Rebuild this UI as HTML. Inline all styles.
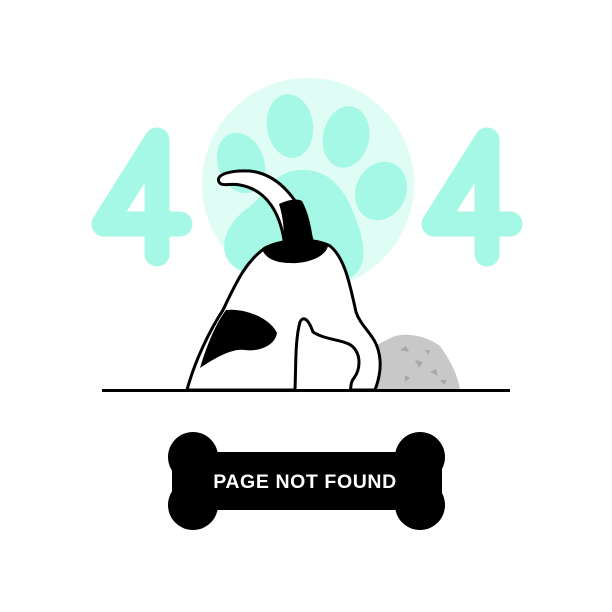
<!DOCTYPE html>
<html><head><meta charset="utf-8"><style>
html,body{margin:0;padding:0;background:#fff;width:612px;height:612px;overflow:hidden}
svg{display:block}
</style></head><body>
<svg width="612" height="612" viewBox="0 0 612 612" xmlns="http://www.w3.org/2000/svg">
<rect width="612" height="612" fill="#fff"/>
<g fill="none" stroke="#a5f7e6" stroke-width="25" stroke-linecap="round" stroke-linejoin="round">
<path d="M157 140 L157 254 M157 140 L104 224 L180 224"/>
<path d="M487 140 L487 254 M487 140 L434 224 L510 224"/>
</g>
<circle cx="308" cy="184" r="106" fill="#dffcf5"/>
<g fill="#a5f7e6">
<ellipse cx="290" cy="126" rx="23" ry="32" transform="rotate(-8 290 126)"/>
<ellipse cx="346" cy="137" rx="23" ry="31" transform="rotate(12 346 137)"/>
<ellipse cx="241" cy="163" rx="23" ry="31" transform="rotate(-20 241 163)"/>
<ellipse cx="381" cy="191" rx="25" ry="30" transform="rotate(25 381 191)"/>
<path d="M300 170 C335 168 350 200 358 225 C370 258 362 282 335 280 C315 278 305 264 290 264 C268 264 250 282 232 265 C215 248 228 222 248 208 C268 193 272 172 300 170 Z"/>
</g>
<path d="M312 390 C330 370 375 345 395 336 C410 332 430 338 440 346 C450 360 458 375 460 390 Z" fill="#c8c8c8"/>
<g fill="#a8a8a8">
<path d="M400 350 l6 -4 l3 6z"/><path d="M415 360 l8 2 l-4 6z"/><path d="M430 372 l6 -3 l2 7z"/><path d="M405 375 l5 3 l-5 4z"/><path d="M425 350 l5 0 l-2 5z"/><path d="M440 380 l7 0 l-3 5z"/><path d="M335 378 l6 -2 l0 6z"/>
</g>
<path d="M187 390 C195 360 210 330 223 310 C235 285 245 262 265 248 C285 238 315 238 330 246 C345 258 350 285 356 312 C362 330 378 335 380 360 C381 372 378 382 375 390 Z" fill="#fff" stroke="#000" stroke-width="3" stroke-linejoin="round"/>
<path d="M262 249 C280 238 312 236 328 246 C325 258 305 264 290 263 C275 263 265 258 262 249 Z" fill="#000"/>
<path d="M226 310 C245 308 270 318 277 333 C275 346 258 352 245 350 C232 348 215 358 200 368 C207 345 215 325 226 310 Z" fill="#000"/>
<path d="M295 390 C296 365 295 340 300 322 C303 316 308 318 313 332 C325 340 345 340 352 346 C362 355 360 370 354 378 C349 384 352 388 350 390" fill="#fff" stroke="#000" stroke-width="3" stroke-linejoin="round"/>
<path d="M219 182 C215 174 232 170 250 171 C278 174 302 200 312 240 L284 240 C280 215 268 190 240 185 C230 183 222 187 219 182 Z" fill="#fff" stroke="#000" stroke-width="3" stroke-linejoin="round"/>
<path d="M279 204 C288 200 296 198 302 201 C308 212 311 225 313 240 L284 240 C284 225 282 213 279 204 Z" fill="#000"/>
<rect x="102" y="389" width="408" height="3" fill="#000"/>
<g fill="#000">
<circle cx="193" cy="457" r="25"/><circle cx="193" cy="505" r="25"/>
<circle cx="420" cy="457" r="25"/><circle cx="420" cy="505" r="25"/>
<rect x="193" y="452" width="227" height="58"/>
<rect x="172" y="457" width="270" height="48"/>
</g>
<text x="305" y="488" text-anchor="middle" font-family="Liberation Sans, sans-serif" font-weight="bold" font-size="19.5" fill="#fff" letter-spacing="0.6">PAGE NOT FOUND</text>
</svg>
</body></html>
